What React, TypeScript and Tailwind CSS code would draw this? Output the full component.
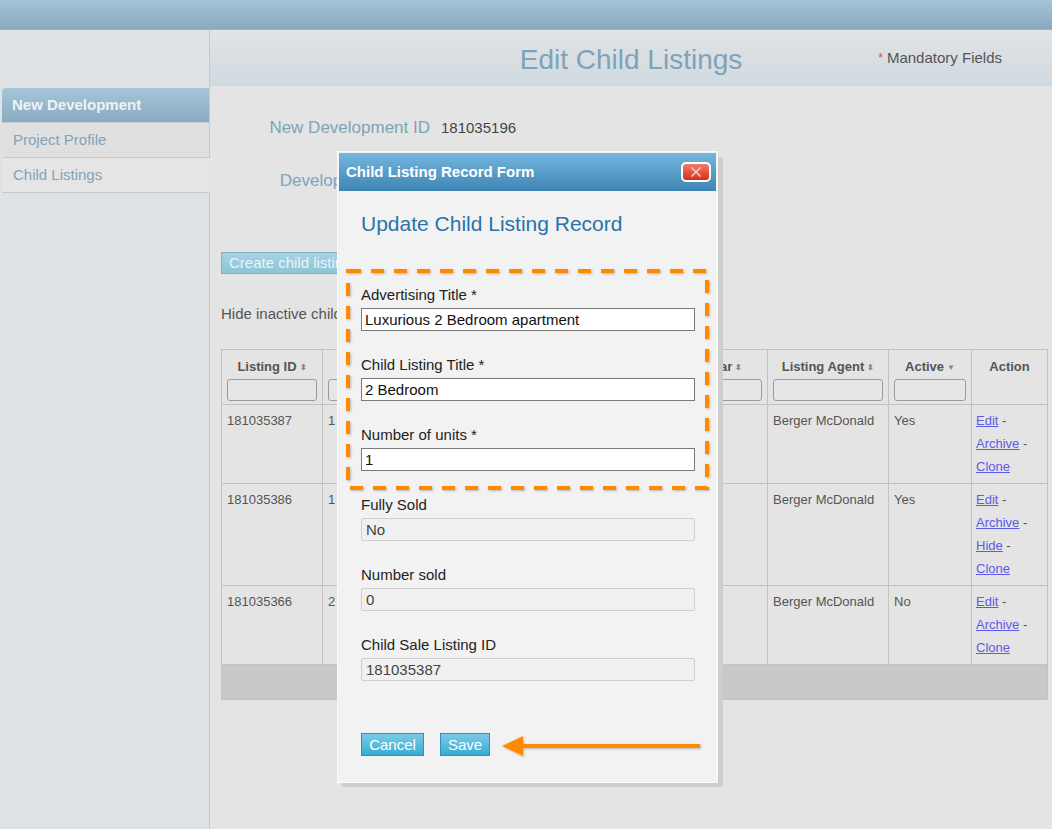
import React from "react";

const font = { fontFamily: '"Liberation Sans", Arial, sans-serif' };

// sort arrows shown next to table headers
const Sort = () => <span className="ml-[3px] align-middle text-[8px] text-[#888]">&#x2B0D;</span>;

const rows = [
  { id: "181035387", title: "1 Bedroom", agent: "Berger McDonald", active: "Yes", actions: ["Edit", "Archive", "Clone"] },
  { id: "181035386", title: "1 Bedroom", agent: "Berger McDonald", active: "Yes", actions: ["Edit", "Archive", "Hide", "Clone"] },
  { id: "181035366", title: "2 Bedroom", agent: "Berger McDonald", active: "No", actions: ["Edit", "Archive", "Clone"] },
];

const Field = ({ label, value, readOnly }: { label: string; value: string; readOnly?: boolean }) => (
  <div className="mb-[25px]">
    <div className="text-[15px] leading-[18px] text-[#222] mb-[4px]">{label}</div>
    <div
      className={
        readOnly
          ? "h-[23px] w-[334px] border border-[#cfcfcf] bg-[#f0f0f0] px-[4px] text-[15px] leading-[21px] text-[#444] rounded-[2px]"
          : "h-[23px] w-[334px] border border-[#7a7a7a] bg-white px-[3px] text-[15px] leading-[21px] text-[#111]"
      }
    >
      {value}
    </div>
  </div>
);

export default function App() {
  return (
    <div className="relative min-h-[829px] w-[1052px] overflow-hidden bg-[#e4e4e4]" style={font}>
      {/* top bar */}
      <div className="h-[30px] bg-gradient-to-b from-[#a4c4d6] to-[#88aabe] border-b border-[#9ab4c4]" />

      <div className="flex min-h-[799px]">
        {/* sidebar */}
        <aside className="w-[210px] shrink-0 bg-[#dfe2e4] border-r border-[#c9c9c9] pt-[58px] pl-[2px]">
          <div className="h-[35px] rounded-tl-[4px] bg-gradient-to-b from-[#a5c6d9] to-[#8aabc0] border-b border-[#c6cdd2] pl-[10px] flex items-center text-[15px] font-bold text-[#eef3f6]">
            New Development
          </div>
          <div className="h-[35px] bg-[#e0e0e0] border-b border-[#c8c8c8] pl-[11px] flex items-center text-[15px] text-[#7fa4bb]">
            Project Profile
          </div>
          <div className="h-[35px] bg-[#e5e5e5] border-b border-[#c8c8c8] pl-[11px] flex items-center text-[15px] text-[#7fa4bb] -mr-[1px]">
            Child Listings
          </div>
        </aside>

        {/* main */}
        <main className="flex-1 min-w-0">
          <div className="h-[56px] grid grid-cols-[1fr_auto_1fr] items-center bg-gradient-to-b from-[#e2e3e4] to-[#cfdae1]">
            <div />
            <h1 className="text-[28px] text-[#7fa3b8] leading-none pt-[4px]">Edit Child Listings</h1>
            <div className="flex justify-end items-center pr-[50px] text-[15px] text-[#555]">
              <span className="text-[#d05050] mr-[4px] text-[12px] leading-[16px]">*</span>Mandatory Fields
            </div>
          </div>

          <div className="pl-[11px]">
            <div className="mt-[31px] flex items-center h-[22px]">
              <div className="w-[209px] text-right text-[17px] text-[#7fa3b8]">New Development ID</div>
              <div className="ml-[11px] text-[15px] text-[#444]">181035196</div>
            </div>
            <div className="mt-[31px] flex items-center h-[22px]">
              <div className="w-[209px] text-right text-[17px] text-[#7fa3b8]">Development Name</div>
              <div className="ml-[11px] text-[15px] text-[#444]">Luxury Apartments</div>
            </div>

            <button className="mt-[60px] h-[22px] px-[7px] border border-[#7fb0c4] bg-gradient-to-b from-[#a6d4e2] to-[#8cc4d6] text-[15px] leading-[20px] text-[#e9f4f8]">
              Create child listing
            </button>

            <div className="mt-[30px] flex items-center text-[15px] text-[#555] h-[18px]">
              Hide inactive child listings
              <input type="checkbox" className="ml-[6px]" readOnly />
            </div>

            <table className="mt-[26px] w-[826px] border-collapse text-[13px] text-[#555] table-fixed">
              <colgroup>
                <col className="w-[101px]" />
                <col className="w-[150px]" />
                <col className="w-[70px]" />
                <col className="w-[70px]" />
                <col className="w-[73px]" />
                <col className="w-[82px]" />
                <col className="w-[121px]" />
                <col className="w-[83px]" />
                <col className="w-[76px]" />
              </colgroup>
              <thead>
                <tr className="bg-[#e4e4e4]">
                  {["Listing ID", "Child Listing Title", "Bed", "Bath", "Price", "Car", "Listing Agent", "Active"].map((h) => (
                    <th key={h} className="border border-[#c2c2c2] pt-[8px] pb-[3px] px-[5px] align-top font-bold">
                      <div className="h-[18px] leading-[18px] whitespace-nowrap">
                        {h}
                        {h === "Active" ? <span className="ml-[3px] text-[8px] text-[#888] align-middle">&#9660;</span> : <Sort />}
                      </div>
                      <div className="mt-[3px] h-[22px] border border-[#9a9a9a] rounded-[3px] bg-[#e6e6e6]" />
                    </th>
                  ))}
                  <th className="border border-[#c2c2c2] pt-[8px] px-[5px] align-top font-bold">
                    <div className="h-[18px] leading-[18px]">Action</div>
                  </th>
                </tr>
              </thead>
              <tbody>
                {rows.map((r) => (
                  <tr key={r.id} className="bg-[#e4e4e4]">
                    <td className="border border-[#c2c2c2] pl-[5px] pt-[4px] pb-[5px] align-top leading-[23px]">{r.id}</td>
                    <td className="border border-[#c2c2c2] pl-[5px] pt-[4px] align-top leading-[23px]">{r.title}</td>
                    <td className="border border-[#c2c2c2] pl-[5px] pt-[4px] align-top leading-[23px]">{r.title[0]}</td>
                    <td className="border border-[#c2c2c2] pl-[5px] pt-[4px] align-top leading-[23px]">1</td>
                    <td className="border border-[#c2c2c2] pl-[5px] pt-[4px] align-top leading-[23px]" />
                    <td className="border border-[#c2c2c2] pl-[5px] pt-[4px] align-top leading-[23px]">1</td>
                    <td className="border border-[#c2c2c2] pl-[5px] pt-[4px] align-top leading-[23px] whitespace-nowrap">{r.agent}</td>
                    <td className="border border-[#c2c2c2] pl-[5px] pt-[4px] align-top leading-[23px]">{r.active}</td>
                    <td className="border border-[#c2c2c2] pl-[4px] pt-[4px] pb-[5px] align-top leading-[23px]">
                      {r.actions.map((a, i) => (
                        <div key={a}>
                          <a className="underline text-[#5b5be8]">{a}</a>
                          {i < r.actions.length - 1 && " -"}
                        </div>
                      ))}
                    </td>
                  </tr>
                ))}
                <tr>
                  <td colSpan={9} className="h-[35px] bg-[#c8c8c8] border border-[#c2c2c2]" />
                </tr>
              </tbody>
            </table>
          </div>
        </main>
      </div>

      {/* modal shadow */}
      <div className="absolute left-[342px] top-[157px] w-[381px] h-[630px] bg-[#cdcdcd]" />

      {/* modal */}
      <div className="absolute left-[337px] top-[151px] w-[381px] h-[632px] border border-[#fafafa] bg-[#f2f2f2]">
        <div className="h-[38px] mt-[1px] mx-[1px] bg-gradient-to-b from-[#74b6de] to-[#3f85b4] flex items-center justify-between pl-[7px] pr-[5px]">
          <span className="text-[15px] font-bold text-white">Child Listing Record Form</span>
          <span className="w-[30px] h-[20px] rounded-[5px] border-2 border-white bg-gradient-to-b from-[#ef7a6a] to-[#d82a10] flex items-center justify-center">
            <svg width="12" height="12" viewBox="0 0 12 12">
              <path d="M1.5 1.5 L10.5 10.5 M10.5 1.5 L1.5 10.5" stroke="#f8d0c8" strokeWidth="1.6" />
            </svg>
          </span>
        </div>
        <div className="pl-[23px] pt-[20px]">
          <h2 className="text-[21px] leading-[26px] text-[#2b72a7] mb-[49px]">Update Child Listing Record</h2>
          <Field label="Advertising Title *" value="Luxurious 2 Bedroom apartment" />
          <Field label="Child Listing Title *" value="2 Bedroom" />
          <Field label="Number of units *" value="1" />
          <Field label="Fully Sold" value="No" readOnly />
          <Field label="Number sold" value="0" readOnly />
          <Field label="Child Sale Listing ID" value="181035387" readOnly />
          <div className="flex gap-[16px] mt-[52px]">
            <button className="h-[23px] w-[63px] border border-[#3b8cbe] bg-gradient-to-b from-[#78cce6] to-[#36abd3] text-[15px] text-white leading-[21px]">
              Cancel
            </button>
            <button className="h-[23px] w-[50px] border border-[#3b8cbe] bg-gradient-to-b from-[#78cce6] to-[#36abd3] text-[15px] text-white leading-[21px]">
              Save
            </button>
          </div>
        </div>
      </div>

      {/* annotation: dashed box */}
      <svg className="absolute left-[340px] top-[264px]" width="376" height="232" viewBox="0 0 376 232">
        <defs>
          <filter id="sh" x="-5%" y="-5%" width="110%" height="110%">
            <feDropShadow dx="1" dy="1" stdDeviation="1" floodColor="#000" floodOpacity="0.25" />
          </filter>
        </defs>
        <rect x="8" y="7" width="359" height="217" fill="none" stroke="#ff8a00" strokeWidth="4" strokeDasharray="13 10" filter="url(#sh)" />
      </svg>

      {/* annotation: arrow */}
      <svg className="absolute left-[498px] top-[732px]" width="210" height="30" viewBox="0 0 210 30">
        <defs>
          <filter id="sh2" x="-5%" y="-30%" width="110%" height="160%">
            <feDropShadow dx="1" dy="1" stdDeviation="1" floodColor="#000" floodOpacity="0.25" />
          </filter>
        </defs>
        <g filter="url(#sh2)">
          <line x1="22" y1="14" x2="202" y2="14" stroke="#ff8a00" strokeWidth="4" />
          <path d="M4 14 L25 4 L25 24 Z" fill="#ff8a00" />
        </g>
      </svg>
    </div>
  );
}
